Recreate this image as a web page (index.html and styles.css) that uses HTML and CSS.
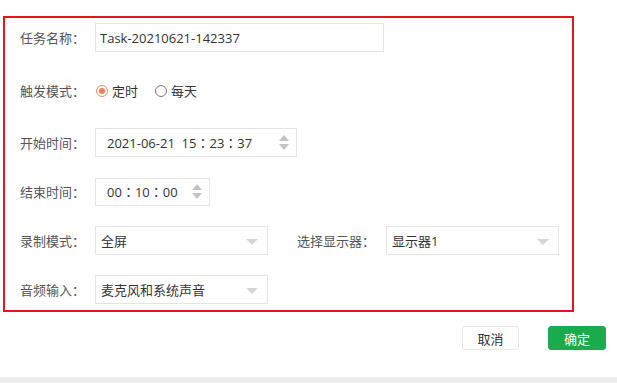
FILE: index.html
```html
<!DOCTYPE html>
<html lang="zh-CN">
<head>
    <meta charset="UTF-8">
    <title>定时录制</title>
    <link rel="stylesheet" href="styles.css">
</head>
<body>
    <div class="dialog">
        <!-- form area -->
        <div class="taskForm">
            <div class="formRow first">
                <span class="label">任务名称<span class="colon">：</span></span>
                <div class="field nameField">Task-20210621-142337</div>
            </div>

            <div class="formRow trigger">
                <span class="label">触发模式<span class="colon">：</span></span>
                <span class="radio checked"></span><span class="radioText">定时</span>
                <span class="radio"></span><span class="radioText">每天</span>
            </div>

            <div class="formRow start">
                <span class="label">开始时间<span class="colon">：</span></span>
                <div class="field timeField startField">
                    <span class="timeText">2021-06-21&nbsp; 15<span class="colon">：</span>23<span class="colon">：</span>37</span>
                    <span class="spinner"><i class="up"></i><i class="down"></i></span>
                </div>
            </div>

            <div class="formRow">
                <span class="label">结束时间<span class="colon">：</span></span>
                <div class="field timeField endField">
                    <span class="timeText">00<span class="colon">：</span>10<span class="colon">：</span>00</span>
                    <span class="spinner"><i class="up"></i><i class="down"></i></span>
                </div>
            </div>

            <div class="formRow">
                <span class="label">录制模式<span class="colon">：</span></span>
                <div class="field select">全屏<i class="caret"></i></div>
                <span class="label wideLabel">选择显示器<span class="colon">：</span></span>
                <div class="field select">显示器1<i class="caret"></i></div>
            </div>

            <div class="formRow">
                <span class="label">音频输入<span class="colon">：</span></span>
                <div class="field select">麦克风和系统声音<i class="caret"></i></div>
            </div>
        </div>

        <!-- buttons -->
        <div class="footer">
            <button class="btn cancelBtn">取消</button>
            <button class="btn okBtn">确定</button>
        </div>
    </div>
    <div class="bottomBar"></div>
</body>
</html>
```

FILE: styles.css
```css
/* page */
body {
    margin: 0;
    background-color: #ffffff;
    font-family: "Open Sans", "Noto Sans CJK SC", sans-serif;
    font-size: 13px;
    color: #555555;
}

.dialog {
    box-sizing: border-box;
    height: 377px;
    padding-top: 16px;
}

/* centred full-width colon, like the original UI font */
.colon {
    font-family: "Noto Sans CJK TC", sans-serif;
}

/* red outlined form */
.taskForm {
    margin-left: 3px;
    width: 552px;
    border: 2px solid #e3161f;
    padding: 5px 0 6px 15px;
}

.formRow {
    display: flex;
    align-items: center;
    height: 29px;
    margin-top: 20px;
}

.formRow.first {
    margin-top: 0;
}

.formRow.trigger {
    margin-top: 24px;
}

.formRow.start {
    margin-top: 23px;
}

.label {
    width: 75px;
    flex-shrink: 0;
    color: #555555;
}

.wideLabel {
    width: 89px;
    margin-left: 29px;
}

.field {
    box-sizing: border-box;
    height: 29px;
    border: 1px solid #e4e4e4;
    display: flex;
    align-items: center;
    padding-left: 5px;
    color: #333333;
    position: relative;
}

.nameField {
    width: 289px;
    padding-left: 4px;
    border-color: #e6e0ea;
}

/* time inputs with spinner */
.timeField {
    padding-left: 11px;
}

.startField {
    width: 202px;
}

.endField {
    width: 115px;
    height: 28px;
}

.timeText {
    flex: 1;
    white-space: nowrap;
}

.spinner {
    display: flex;
    flex-direction: column;
    gap: 3px;
    margin-right: 7px;
}

.spinner i {
    width: 0;
    height: 0;
    border-left: 5px solid transparent;
    border-right: 5px solid transparent;
}

.spinner .up {
    border-bottom: 6px solid #c3c3c3;
}

.spinner .down {
    border-top: 6px solid #c3c3c3;
}

/* selects */
.select {
    width: 173px;
}

.caret {
    position: absolute;
    right: 9px;
    top: 12px;
    width: 0;
    height: 0;
    border-left: 6px solid transparent;
    border-right: 6px solid transparent;
    border-top: 6px solid #d6d6d6;
}

/* radios */
.radio {
    box-sizing: border-box;
    width: 12px;
    height: 12px;
    border: 1px solid #777777;
    border-radius: 50%;
    margin-left: 1px;
    margin-right: 4px;
    position: relative;
}

.radio.checked {
    border-color: #ef8f68;
}

.radio.checked::after {
    content: "";
    position: absolute;
    left: 2px;
    top: 2px;
    width: 6px;
    height: 6px;
    border-radius: 50%;
    background-color: #ef7f57;
}

.radioText {
    color: #333333;
    margin-right: 16px;
}

/* footer buttons */
.footer {
    display: flex;
    justify-content: flex-end;
    gap: 29px;
    margin: 14px 11px 0 0;
}

.btn {
    font-family: "Open Sans", "Noto Sans CJK SC", sans-serif;
    font-size: 13px;
    height: 24px;
    border-radius: 3px;
    padding: 0;
    cursor: pointer;
}

.cancelBtn {
    width: 57px;
    background-color: #ffffff;
    border: 1px solid #e6e6e6;
    color: #333333;
}

.okBtn {
    width: 58px;
    background-color: #1aab4c;
    border: 1px solid #1aab4c;
    color: #ffffff;
}

.bottomBar {
    height: 6px;
    background-color: #eeeeee;
}
```
